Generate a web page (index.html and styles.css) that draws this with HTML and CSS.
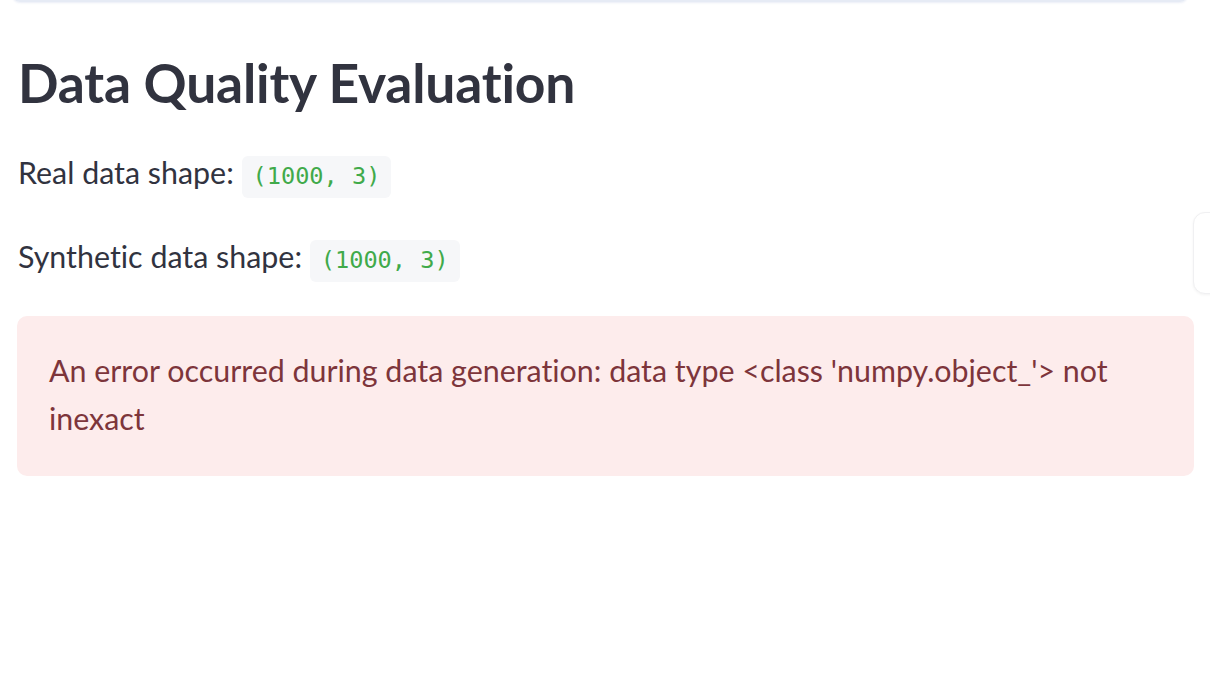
FILE: index.html
```html
<!DOCTYPE html>
<html>
<head>
<meta charset="utf-8">
<link rel="stylesheet" href="styles.css">
</head>
<body>
<div class="page">
  <div class="prev-block"></div>
  <main class="main">
    <h1 class="title">Data Quality Evaluation</h1>
    <p class="line">Real data shape: <code class="code">(1000, 3)</code></p>
    <p class="line">Synthetic data shape: <code class="code">(1000, 3)</code></p>
    <div class="alert">An error occurred during data generation: data type &lt;class 'numpy.object_'&gt; not inexact</div>
  </main>
  <div class="side-card"></div>
</div>
</body>
</html>
```
FILE: styles.css
```css
html, body {
  margin: 0;
  padding: 0;
  background: #ffffff;
}
.page {
  position: relative;
  width: 1210px;
  height: 700px;
  overflow: hidden;
  font-family: Lato, "Noto Sans", sans-serif;
  font-variant-ligatures: none;
  color: #31333f;
}
.prev-block {
  margin: -14px 22px 0 12px;
  height: 14px;
  border: 1px solid #e3e8f3;
  border-top: none;
  border-bottom: 2px solid #e6ebf5;
  border-radius: 0 0 8px 8px;
  box-shadow: 0 1px 2px rgba(120, 140, 200, 0.15);
}
.main {
  padding: 0 16px 0 17px;
  display: flex;
  flex-direction: column;
}
.title {
  margin: 48px 0 0 1px;
  font-size: 53.4px;
  font-weight: 700;
  line-height: 1.2;
  letter-spacing: -0.2px;
  color: #31333f;
}
.line {
  margin: 34px 0 0 1px;
  font-size: 30.4px;
  line-height: 48px;
}
.line + .line {
  margin-top: 32px;
}
.code {
  font-family: "DejaVu Sans Mono", "Liberation Mono", monospace;
  font-size: 23.6px;
  color: #40aa4a;
  background: #f6f7f9;
  border-radius: 6px;
  padding: 6px 11px 8px;
}
.alert {
  margin-top: 32px;
  padding: 30px 32px 34px 32px;
  background: #fdecec;
  border-radius: 10px;
  color: #7d353b;
  font-size: 30.4px;
  line-height: 48px;
}
.side-card {
  position: absolute;
  left: 1193px;
  top: 212px;
  width: 40px;
  height: 80px;
  background: #ffffff;
  border: 1px solid #f0f0f2;
  border-radius: 12px;
  box-shadow: 0 1px 3px rgba(0, 0, 0, 0.05);
}
```
